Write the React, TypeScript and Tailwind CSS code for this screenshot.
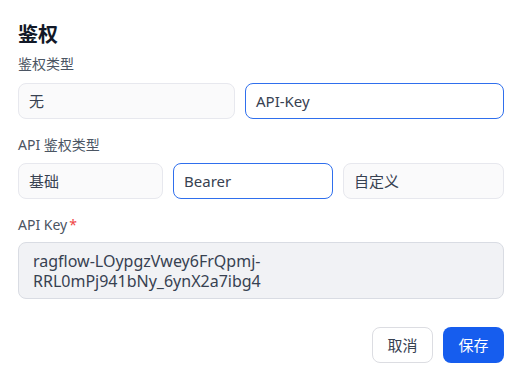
import { useState } from 'react'

const font = { fontFamily: '"Noto Sans", "Noto Sans CJK SC", sans-serif' }

interface OptionProps {
  label: string
  active: boolean
  className: string
  onClick: () => void
}

function Option({ label, active, className, onClick }: OptionProps) {
  return (
    <button
      type="button"
      onClick={onClick}
      className={
        'h-[36px] rounded-lg border px-[10px] text-left text-[15px] text-[#374151] ' +
        (active ? 'border-[#2f6fed] bg-white' : 'border-[#e7e8ee] bg-[#fafafb]') +
        ' ' +
        className
      }
    >
      {label}
    </button>
  )
}

export default function App() {
  const [authType, setAuthType] = useState('api-key')
  const [apiType, setApiType] = useState('bearer')

  return (
    <div className="h-[385px] w-[524px] bg-white px-[18px] pt-[21px]" style={font}>
      <h2 className="text-xl font-bold leading-[28px] text-[#111827]">鉴权</h2>

      <p className="mt-[5px] text-sm leading-5 text-[#4b5563]">鉴权类型</p>
      <div className="mt-[9px] flex gap-[10px]">
        <Option label="无" active={authType === 'none'} className="w-[217px]" onClick={() => setAuthType('none')} />
        <Option label="API-Key" active={authType === 'api-key'} className="w-[259px]" onClick={() => setAuthType('api-key')} />
      </div>

      <p className="mt-[16px] text-sm leading-5 text-[#4b5563]">API 鉴权类型</p>
      <div className="mt-[8px] flex gap-[10px]">
        <Option label="基础" active={apiType === 'basic'} className="w-[145px]" onClick={() => setApiType('basic')} />
        <Option label="Bearer" active={apiType === 'bearer'} className="w-[160px]" onClick={() => setApiType('bearer')} />
        <Option label="自定义" active={apiType === 'custom'} className="w-[161px]" onClick={() => setApiType('custom')} />
      </div>

      <p className="mt-[16px] text-sm leading-5 text-[#4b5563]">
        API Key<span className="ml-[2px] text-[#ef4444]">*</span>
      </p>
      <div className="mt-[7px] h-[57px] w-[486px] rounded-lg border border-[#d9dce3] bg-[#f1f2f5] px-[14px] py-2 text-base leading-5 text-[#374151]">
        ragflow-LOypgzVwey6FrQpmj-
        <br />
        RRL0mPj941bNy_6ynX2a7ibg4
      </div>

      <div className="mt-[28px] flex w-[486px] justify-end gap-[10px]">
        <button
          type="button"
          className="h-[36px] w-[61px] rounded-lg border border-[#dcdde2] bg-white text-[15px] text-[#374151]"
        >
          取消
        </button>
        <button
          type="button"
          className="h-[36px] w-[61px] rounded-lg bg-[#165dee] text-[15px] text-white"
        >
          保存
        </button>
      </div>
    </div>
  )
}
